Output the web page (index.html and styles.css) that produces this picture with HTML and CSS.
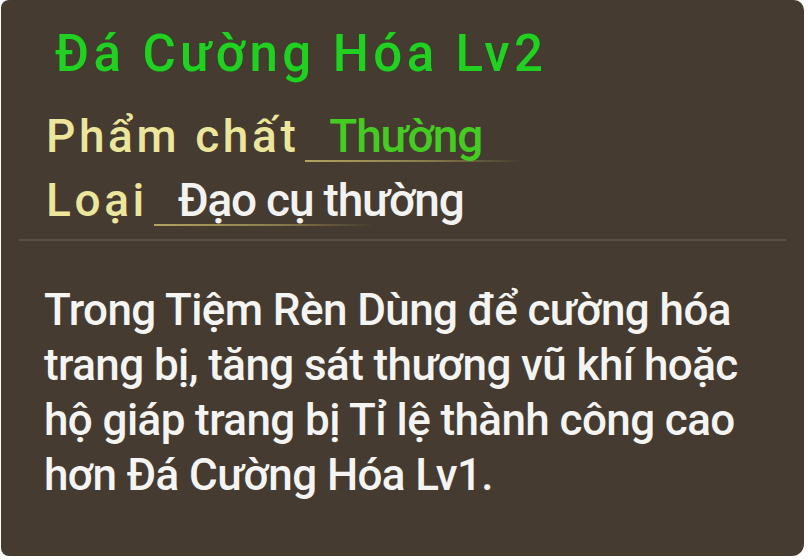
FILE: index.html
```html
<!DOCTYPE html>
<html lang="vi">
<head>
<meta charset="utf-8">
<title>Đá Cường Hóa Lv2</title>
<link rel="stylesheet" href="styles.css">
</head>
<body>
<div class="panel">
  <div class="title">Đá Cường Hóa Lv2</div>
  <div class="row row-first">
    <span class="label">Phẩm chất</span>
    <span class="value value-green">Thường</span>
  </div>
  <div class="row">
    <span class="label">Loại</span>
    <span class="value value-white">Đạo cụ thường</span>
  </div>
  <div class="divider"></div>
  <p class="desc">Trong Tiệm Rèn Dùng để cường hóa trang bị, tăng sát thương vũ khí hoặc hộ giáp trang bị Tỉ lệ thành công cao hơn Đá Cường Hóa Lv1.</p>
</div>
</body>
</html>
```
FILE: styles.css
```css
html, body {
  margin: 0;
  padding: 0;
  background: #ffffff;
}
body {
  width: 808px;
  height: 560px;
  overflow: hidden;
  font-family: Roboto, "Noto Sans", sans-serif;
}
.panel {
  box-sizing: border-box;
  width: 803px;
  height: 556px;
  margin-left: 1px;
  background: #453b31;
  border-radius: 8px 10px 12px 8px;
  padding: 24px 0 0 0;
}
.title {
  padding-left: 54px;
  font-size: 51px;
  font-weight: 500;
  line-height: 60px;
  letter-spacing: 4.4px;
  color: #22d022;
  text-shadow: 0 0 1px #0b5a10;
}
.row {
  display: flex;
  align-items: baseline;
  padding-left: 45px;
  height: 64px;
  line-height: 64px;
}
.row-first {
  margin-top: 20px;
}
.label {
  font-size: 46px;
  font-weight: 500;
  letter-spacing: 3.6px;
  color: #ece69c;
}
.value {
  margin-left: 6px;
  padding-left: 24px;
  padding-right: 40px;
  font-size: 46px;
  font-weight: 500;
  line-height: 52px;
  letter-spacing: -1.2px;
  background: linear-gradient(to right, #b3a460 0%, #8a7d4c 55%, rgba(138,125,76,0) 100%) no-repeat left bottom / 220px 2px;
}
.value-green {
  color: #44cc22;
}
.value-white {
  color: #f2f2f0;
}
.divider {
  margin: 7px 18px 0 18px;
  height: 2px;
  background: #5b5247;
}
.desc {
  margin: 42px 40px 0 43px;
  font-size: 44px;
  font-weight: 500;
  line-height: 55px;
  letter-spacing: -0.6px;
  color: #f4f4f2;
}
```
